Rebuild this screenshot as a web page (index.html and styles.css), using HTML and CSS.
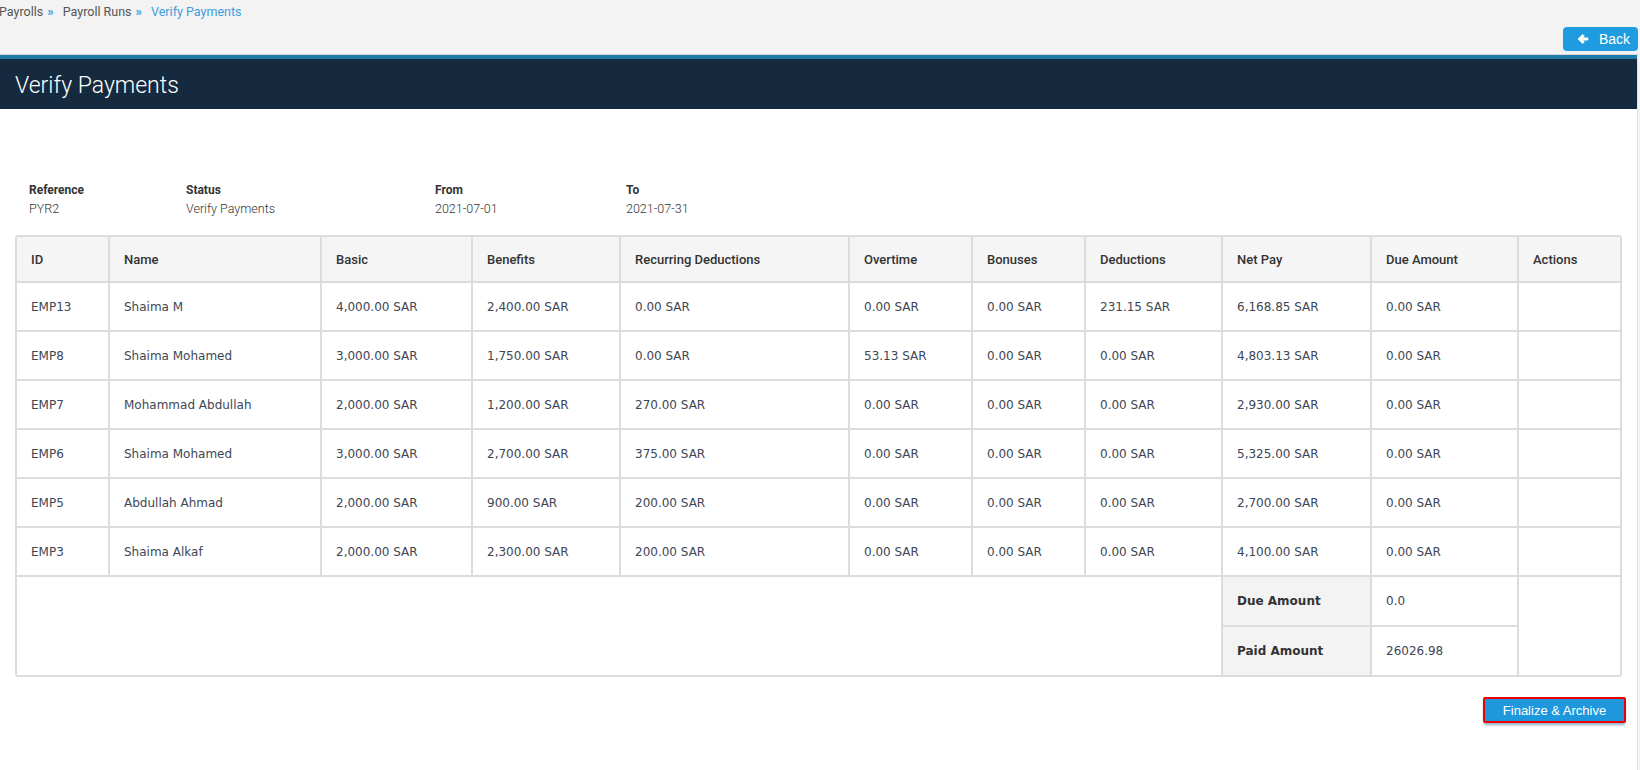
FILE: index.html
```html
<!DOCTYPE html>
<html>
<head>
<meta charset="utf-8">
<link rel="stylesheet" href="styles.css">
</head>
<body>
<div class="page">
  <div class="topbar">
    <div class="crumbs">
      <span class="crumb">Payrolls</span><span class="sep">&raquo;</span>
      <span class="crumb">Payroll Runs</span><span class="sep">&raquo;</span>
      <span class="crumb active">Verify Payments</span>
    </div>
    <div class="actions">
      <button class="btn-back">
        <svg class="ico" viewBox="0 0 16 16" width="12" height="12"><path d="M1.5 8 L7.5 2 L9.8 4.3 L7.2 6.6 H14.5 V9.4 H7.2 L9.8 11.7 L7.5 14 Z" fill="#fff" stroke="#fff" stroke-width="1.2" stroke-linejoin="round"/></svg>
        <span>Back</span>
      </button>
    </div>
  </div>
  <div class="card">
    <div class="card-head"><h1>Verify Payments</h1></div>
    <div class="card-body">
      <div class="info">
        <div class="info-item"><div class="lbl">Reference</div><div class="val">PYR2</div></div>
        <div class="info-item"><div class="lbl">Status</div><div class="val">Verify Payments</div></div>
        <div class="info-item"><div class="lbl">From</div><div class="val">2021-07-01</div></div>
        <div class="info-item"><div class="lbl">To</div><div class="val">2021-07-31</div></div>
      </div>
      <div class="table-wrap">
      <table class="grid">
        <colgroup>
          <col class="c-id"><col class="c-name"><col class="c-basic"><col class="c-ben"><col class="c-rec"><col class="c-ot"><col class="c-bon"><col class="c-ded"><col class="c-net"><col class="c-due"><col class="c-act">
        </colgroup>
        <thead>
          <tr><th>ID</th><th>Name</th><th>Basic</th><th>Benefits</th><th>Recurring Deductions</th><th>Overtime</th><th>Bonuses</th><th>Deductions</th><th>Net Pay</th><th>Due Amount</th><th>Actions</th></tr>
        </thead>
        <tbody>
          <tr><td>EMP13</td><td>Shaima M</td><td>4,000.00 SAR</td><td>2,400.00 SAR</td><td>0.00 SAR</td><td>0.00 SAR</td><td>0.00 SAR</td><td>231.15 SAR</td><td>6,168.85 SAR</td><td>0.00 SAR</td><td></td></tr>
          <tr><td>EMP8</td><td>Shaima Mohamed</td><td>3,000.00 SAR</td><td>1,750.00 SAR</td><td>0.00 SAR</td><td>53.13 SAR</td><td>0.00 SAR</td><td>0.00 SAR</td><td>4,803.13 SAR</td><td>0.00 SAR</td><td></td></tr>
          <tr><td>EMP7</td><td>Mohammad Abdullah</td><td>2,000.00 SAR</td><td>1,200.00 SAR</td><td>270.00 SAR</td><td>0.00 SAR</td><td>0.00 SAR</td><td>0.00 SAR</td><td>2,930.00 SAR</td><td>0.00 SAR</td><td></td></tr>
          <tr><td>EMP6</td><td>Shaima Mohamed</td><td>3,000.00 SAR</td><td>2,700.00 SAR</td><td>375.00 SAR</td><td>0.00 SAR</td><td>0.00 SAR</td><td>0.00 SAR</td><td>5,325.00 SAR</td><td>0.00 SAR</td><td></td></tr>
          <tr><td>EMP5</td><td>Abdullah Ahmad</td><td>2,000.00 SAR</td><td>900.00 SAR</td><td>200.00 SAR</td><td>0.00 SAR</td><td>0.00 SAR</td><td>0.00 SAR</td><td>2,700.00 SAR</td><td>0.00 SAR</td><td></td></tr>
          <tr><td>EMP3</td><td>Shaima Alkaf</td><td>2,000.00 SAR</td><td>2,300.00 SAR</td><td>200.00 SAR</td><td>0.00 SAR</td><td>0.00 SAR</td><td>0.00 SAR</td><td>4,100.00 SAR</td><td>0.00 SAR</td><td></td></tr>
          <tr class="sum sum-first"><td colspan="8" rowspan="2" class="blank"></td><td class="sum-lbl">Due Amount</td><td>0.0</td><td rowspan="2" class="blank"></td></tr>
          <tr class="sum sum-second"><td class="sum-lbl">Paid Amount</td><td>26026.98</td></tr>
        </tbody>
      </table>
      </div>
      <div class="footer-actions">
        <button class="btn-final">Finalize &amp; Archive</button>
      </div>
    </div>
  </div>
</div>
</body>
</html>
```
FILE: styles.css
```css
html, body {
  margin: 0;
  padding: 0;
  background: #f3f3f3;
}
body {
  font-family: "DejaVu Sans", Verdana, sans-serif;
  overflow: hidden;
  height: 770px;
}
.page {
  width: 1638px;
  display: flex;
  flex-direction: column;
}
.topbar {
  height: 54px;
  display: flex;
  flex-direction: column;
}
.crumbs {
  height: 22px;
  line-height: 21px;
  font-family: Roboto, "Noto Sans", sans-serif;
  font-size: 12.5px;
  color: #555;
  margin-left: -1px;
  display: flex;
  align-items: center;
}
.crumb.active { color: #3d9ddc; }
.sep {
  color: #3d9ddc;
  margin: 0 9px 0 4px;
  font-weight: bold;
  font-size: 13px;
}
.actions {
  display: flex;
  justify-content: flex-end;
  margin-top: 5px;
}
.btn-back {
  width: 75px;
  height: 24px;
  border: 0;
  border-radius: 4px;
  background: #1f9be0;
  color: #fff;
  font-family: "Liberation Sans", Arial, sans-serif;
  font-size: 14px;
  display: flex;
  align-items: center;
  padding: 0 0 0 14px;
  gap: 10px;
}
.ico { display: block; }
.card {
  background: #fff;
  border-top: 1px solid #d6d6d6;
  border-right: 1px solid #e2e2e2;
  height: 716px;
  box-sizing: border-box;
}
.card-head {
  background: #152a3e;
  border-top: 4px solid #2179a7;
  height: 54px;
  box-sizing: border-box;
  display: flex;
  align-items: center;
  padding-left: 15px;
}
.card-head h1 {
  margin: 0;
  font-family: Roboto, "Noto Sans", sans-serif;
  font-weight: 300;
  font-size: 23px;
  color: #fff;
  padding-top: 3px;
}
.card-body {
  padding: 73px 15px 0 15px;
}
.info {
  display: grid;
  grid-template-columns: 157px 249px 191px auto;
  padding-left: 14px;
  font-family: Roboto, "Noto Sans", sans-serif;
}
.lbl {
  font-size: 12px;
  font-weight: 700;
  color: #333;
  line-height: 17px;
}
.val {
  font-size: 12.5px;
  font-weight: 300;
  color: #333;
  line-height: 19px;
  margin-top: 0;
}
.table-wrap {
  margin-top: 17px;
  width: 1607px;
  border: 2px solid #dcdcdc;
  border-radius: 3px;
  box-sizing: border-box;
  overflow: hidden;
}
.grid {
  width: 100%;
  border-collapse: collapse;
  table-layout: fixed;
}
.c-id { width: 92px; }
.c-name { width: 212px; }
.c-basic { width: 151px; }
.c-ben { width: 148px; }
.c-rec { width: 229px; }
.c-ot { width: 123px; }
.c-bon { width: 113px; }
.c-ded { width: 137px; }
.c-net { width: 149px; }
.c-due { width: 147px; }
.c-act { width: auto; }
.grid th, .grid td {
  border: 2px solid #dcdcdc;
  text-align: left;
  padding: 0 14px;
  vertical-align: middle;
}
.grid tr > :first-child { border-left: 0; }
.grid tr > :last-child { border-right: 0; }
.grid thead th { border-top: 0; }
.grid th {
  height: 44px;
  background: #f5f5f5;
  font-family: Roboto, "Noto Sans", sans-serif;
  font-weight: 500;
  font-size: 13px;
  color: #333;
}
.grid td {
  height: 47px;
  font-size: 12px;
  color: #3e4654;
}
.grid tr.sum td { height: 48px; }
.grid tr.sum-second td { border-bottom: 0; }
.grid tr.sum-first td.sum-lbl, .grid tr.sum-first td:nth-child(3) { border-bottom: 1px solid #dcdcdc; }
.grid td.blank { border-bottom: 0; }
.sum-lbl {
  background: #f3f3f3;
  font-weight: bold;
  color: #333 !important;
}
.footer-actions {
  display: flex;
  justify-content: flex-end;
  width: 1611px;
  margin-top: 20px;
}
.btn-final {
  width: 143px;
  height: 26px;
  background: #1e97dd;
  border: 2px solid #ee0000;
  border-radius: 2px;
  color: #fff;
  font-family: "Liberation Sans", Arial, sans-serif;
  font-size: 13px;
  padding: 0;
  box-shadow: 0 3px 3px -1px rgba(40, 100, 150, 0.55);
}
```
